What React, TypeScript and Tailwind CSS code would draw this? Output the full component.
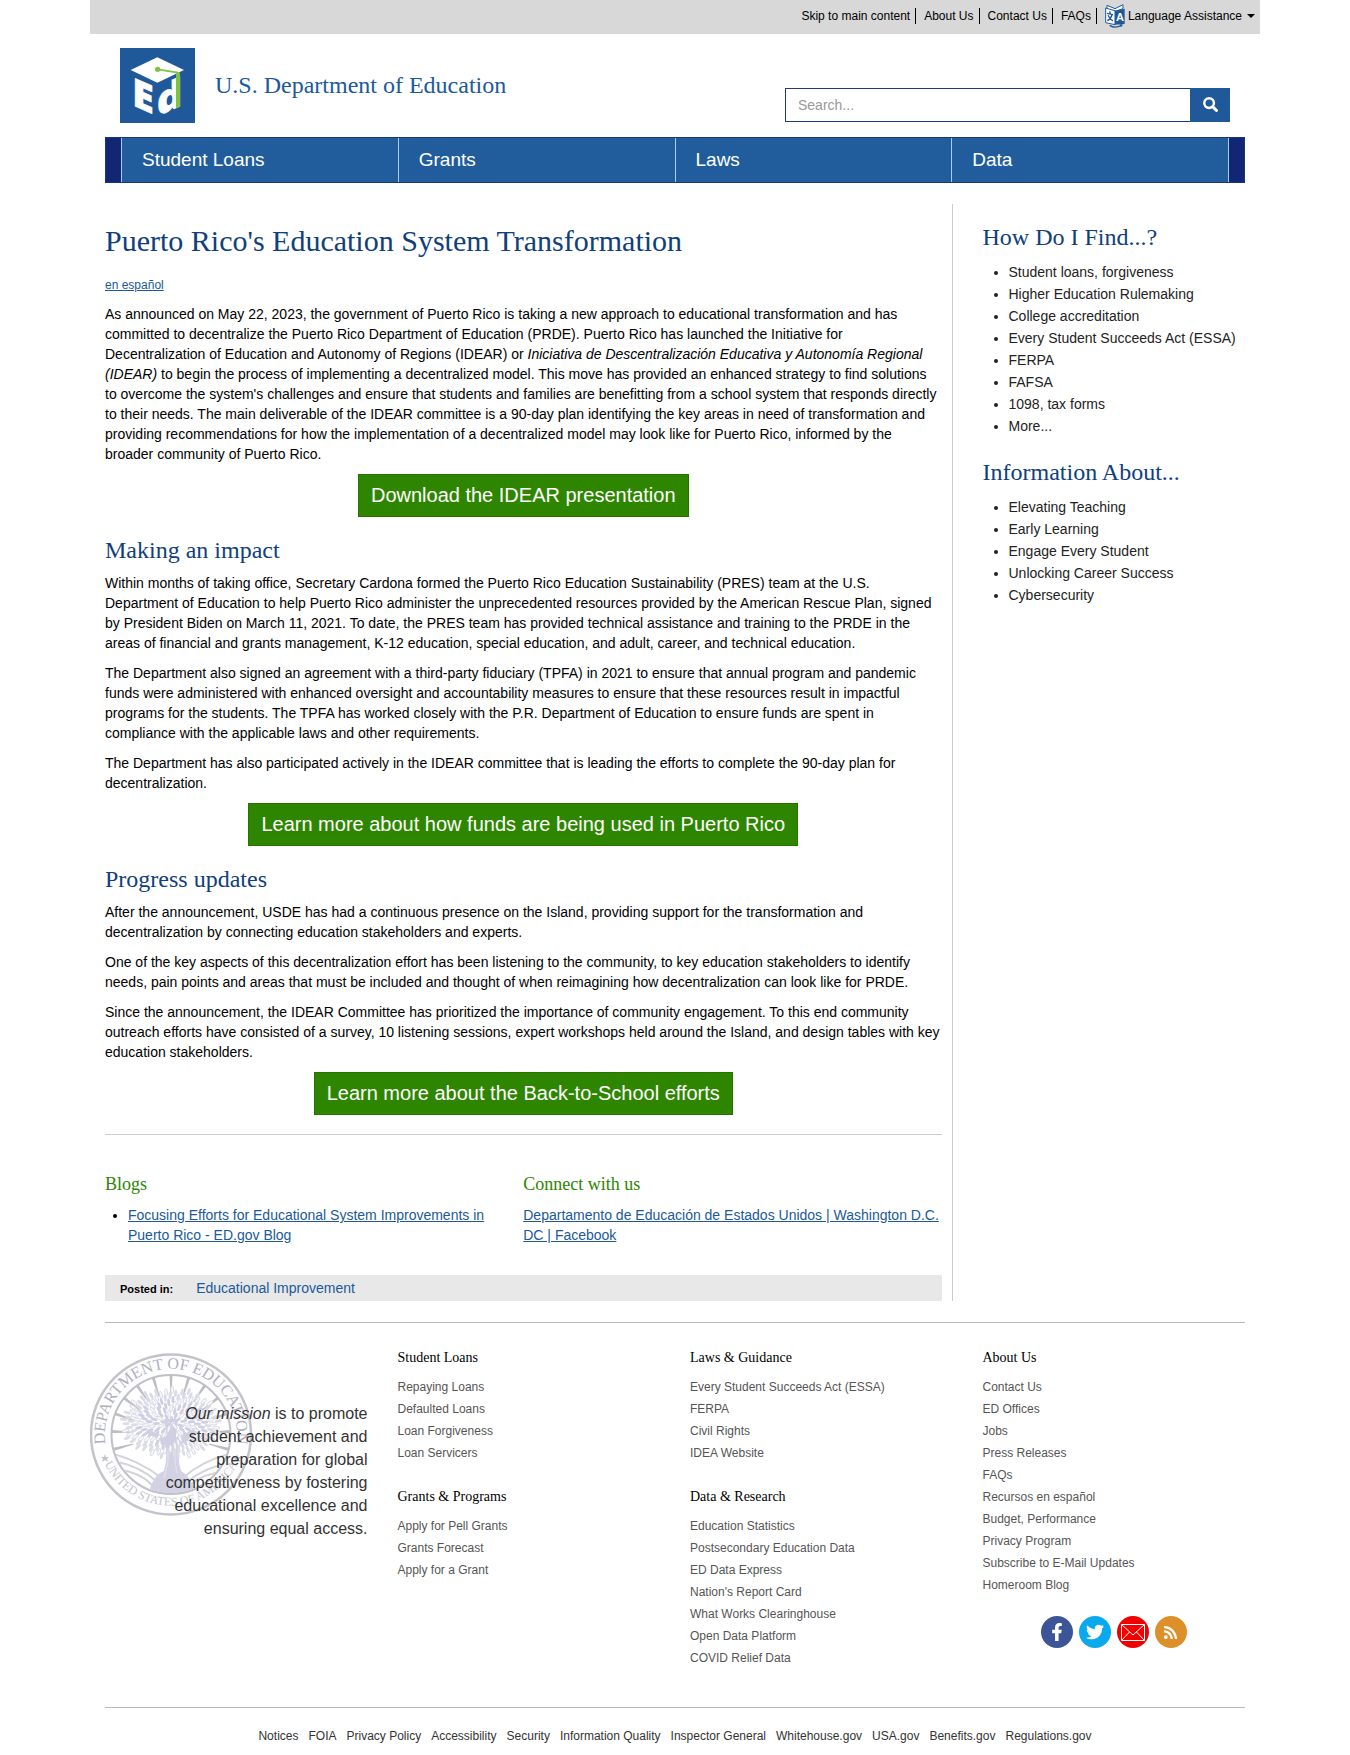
import React from "react";
import { FaFacebookF, FaTwitter, FaRss } from "react-icons/fa";

const serif = "font-['Liberation_Serif',serif]";

function EdLogo() {
  return (
    <svg viewBox="0 0 225 225" className="size-[75px] shrink-0 overflow-visible" role="img" aria-label="ED logo">
      <rect width="225" height="225" fill="#20599a" />
      <g fill="#fff" stroke="#fff" strokeWidth="2" fontFamily="'Open Sans', sans-serif" fontWeight="800">
        <text fontSize="117" transform="matrix(1 0.44 0 1 37 171)">E</text>
        <text fontSize="117" transform="matrix(1 -0.44 0 1 111 205)">d</text>
      </g>
      <path d="M112 28 192 66 112 104 32 66Z" fill="#fff" />
      <path d="M112 64 174 74" stroke="#7dc242" strokeWidth="5" />
      <path d="M168 71 180 74V176L168 181Z" fill="#7dc242" />
      <circle cx="113" cy="64" r="8" fill="#7dc242" />
    </svg>
  );
}

function LanguageIcon() {
  return (
    <svg viewBox="0 0 60 72" className="h-6 w-5" aria-hidden="true">
      <path d="M6 4 30 14 54 2V14L30 22 6 16Z" fill="#fff" stroke="#20599a" strokeWidth="3" />
      <path d="M2 12 30 20V62L2 56Z" fill="#fff" stroke="#20599a" strokeWidth="3" />
      <path d="M30 20 59 14V60L30 62Z" fill="#20599a" />
      <path d="M6 28 24 32M14 22 16 30M21 33Q17 46 7 50M9 34Q14 46 24 51" stroke="#20599a" strokeWidth="4" fill="none" />
      <text x="33" y="52" fontSize="33" fontWeight="700" fill="#fff" fontFamily="'Liberation Sans', sans-serif">A</text>
      <path d="M14 64Q30 74 48 65" fill="none" stroke="#20599a" strokeWidth="4" />
      <path d="M44 60 54 62 48 70Z" fill="#20599a" />
    </svg>
  );
}

const leaves = Array.from({ length: 190 }, (_, i) => {
  const angle = i * 2.39996;
  const radius = Math.sqrt(i / 190);
  return {
    x: 81 + Math.cos(angle) * radius * 49,
    y: 70 + Math.sin(angle) * radius * 34,
    turn: (angle * 180) / Math.PI,
    inner: radius < 0.72,
  };
});

function Seal() {
  const rays = Array.from({ length: 13 }, (_, i) => -105 + i * 17.5);
  return (
    <svg viewBox="0 0 163 163" className="absolute left-0 top-0 size-[163px]" aria-hidden="true">
      <defs>
        <path id="seal-upper" d="M21.300 110 A66 66 0 1 1 140.700 110" />
        <path id="seal-lower" d="M13 107 A73.500 73.500 0 0 0 149 107" />
        <clipPath id="seal-inner"><circle cx="81" cy="81" r="59" /></clipPath>
      </defs>
      <circle cx="81" cy="81.500" r="80" fill="#fdfdfe" stroke="#c3c3c9" strokeWidth="2.500" />
      <circle cx="81" cy="81.500" r="59.500" fill="#fff" stroke="#c0c0c6" strokeWidth="2" />
      {rays.map((a) => (
        <path key={a} d="M79.500 22h3l-1 20h-1z" fill="#bcbcc2" transform={`rotate(${a} 81 81)`} />
      ))}
      <g clipPath="url(#seal-inner)">
        <path d="M20 100Q50 108 70 124M22 108Q48 112 66 128M28 117Q48 118 62 132M142 100Q112 108 94 124M140 110Q116 114 98 128M134 119Q114 120 100 132" fill="none" stroke="#d3d3dc" strokeWidth="2" />
        <path d="M58 144Q62 122 74 118Q78 104 75 92Q66 84 55 80L58 76Q70 82 77 84L74 66H88L86 84Q98 80 106 74L109 78Q98 86 90 93Q87 106 91 118Q103 124 106 144Z" fill="#d2d2e4" />
        <path d="M74 125Q79 110 79 95M87 120Q84 108 85 95" stroke="#e4e4ef" fill="none" />
      </g>
      {leaves.map((l, i) => (
        <ellipse
          key={i}
          cx={l.x}
          cy={l.y}
          rx="3.600"
          ry="1.500"
          transform={`rotate(${l.turn} ${l.x} ${l.y})`}
          fill={i % 3 === 0 ? "#f6f6fb" : l.inner ? "#cfcfe4" : "#dcdce8"}
          stroke={i % 3 === 0 ? "#d0d0dc" : "none"}
          strokeWidth="0.700"
        />
      ))}
      <text className={serif} fontSize="16" fill="#b0b0bc">
        <textPath href="#seal-upper" startOffset="50%" textAnchor="middle">DEPARTMENT OF EDUCATION</textPath>
      </text>
      <text className={serif} fontSize="12" fill="#c4c4cd">
        <textPath href="#seal-lower" startOffset="50%" textAnchor="middle">UNITED STATES OF AMERICA</textPath>
      </text>
      <path d="m15 101 1 3h3l-2 2 1 3-3-2-3 2 1-3-2-2h3zM147 101l1 3h3l-2 2 1 3-3-2-3 2 1-3-2-2h3z" fill="#c3c3cb" />
    </svg>
  );
}

function TopBar() {
  const links = ["Skip to main content", "About Us", "Contact Us", "FAQs"];
  return (
    <div className="flex h-[34px] items-center justify-end bg-[#d8d8d8] pb-[2px] pr-[5px] text-xs leading-4 text-black">
      <ul className="flex">
        {links.map((l) => (
          <li key={l} className="mr-2 border-r border-black pr-[5px]">
            <a href="#">{l}</a>
          </li>
        ))}
      </ul>
      <button type="button" className="flex items-center">
        <LanguageIcon />
        <span className="ml-[3px]">Language Assistance</span>
        <span className="ml-[5px] border-x-4 border-t-4 border-x-transparent border-t-black" />
      </button>
    </div>
  );
}

function Header() {
  return (
    <header className="flex items-center justify-between px-[30px] pt-[14px]">
      <a href="#" className="flex items-center gap-5">
        <EdLogo />
        <span className={`${serif} pb-[2px] text-2xl text-[#20599a]`}>U.S. Department of Education</span>
      </a>
      <form className="mb-px flex w-[445px] self-end" onSubmit={(e) => e.preventDefault()}>
        <input
          type="search"
          aria-label="Search"
          placeholder="Search..."
          className="h-[34px] min-w-0 flex-1 border border-r-0 border-[#1c3d78] bg-white px-3 text-sm placeholder:text-[#999]"
        />
        <button type="submit" aria-label="Submit search" className="flex h-[34px] w-10 items-center justify-center bg-[#20599a]">
          <svg viewBox="0 0 14 14" className="mb-[2px] size-[15px]" fill="none" stroke="#fff" aria-hidden="true">
            <circle cx="5.700" cy="5.700" r="4.500" strokeWidth="2.300" />
            <path d="m9 9 3.600 3.600" strokeWidth="2.800" strokeLinecap="round" />
          </svg>
        </button>
      </form>
    </header>
  );
}

function Nav() {
  return (
    <nav className="mx-[15px] mt-[14px] border border-[#173a76] bg-[#132575] px-[15px]">
      <ul className="grid grid-cols-4 border-r border-[#a9cdf0] bg-[#215d9d] text-[19px] leading-[44px] text-white">
        {["Student Loans", "Grants", "Laws", "Data"].map((l) => (
          <li key={l} className="border-l border-[#a9cdf0]">
            <a href="#" className="block px-5">{l}</a>
          </li>
        ))}
      </ul>
    </nav>
  );
}

function H2({ children }: { children: React.ReactNode }) {
  return <h2 className={`${serif} mb-[10px] mt-5 text-2xl leading-[26px] text-[#0f407c]`}>{children}</h2>;
}

function P({ children }: { children: React.ReactNode }) {
  return <p className="mb-[10px]">{children}</p>;
}

function Cta({ children }: { children: React.ReactNode }) {
  return (
    <div className="flex justify-center">
      <a href="#" className="border border-[#267300] bg-[#2e8600] px-3 py-[6px] text-xl leading-[29px] text-white">{children}</a>
    </div>
  );
}

const link = "text-[#20599a] underline";

function Article() {
  return (
    <main className="col-span-3 px-[15px]">
      <div className="border-r border-[#ccc] pr-[10px] pt-5">
        <h1 className={`${serif} mb-5 text-3xl leading-[33px] text-[#0f407c]`}>Puerto Rico's Education System Transformation</h1>
        <p className="mb-[10px] text-xs leading-[17px]">
          <a href="#" className={link}>en español</a>
        </p>
        <P>
          As announced on May 22, 2023, the government of Puerto Rico is taking a new approach to educational transformation and has committed to decentralize the Puerto Rico Department of Education (PRDE). Puerto Rico has launched the Initiative for Decentralization of Education and Autonomy of Regions (IDEAR) or <em>Iniciativa de Descentralización Educativa y Autonomía Regional (IDEAR)</em> to begin the process of implementing a decentralized model. This move has provided an enhanced strategy to find solutions to overcome the system's challenges and ensure that students and families are benefitting from a school system that responds directly to their needs. The main deliverable of the IDEAR committee is a 90-day plan identifying the key areas in need of transformation and providing recommendations for how the implementation of a decentralized model may look like for Puerto Rico, informed by the broader community of Puerto Rico.
        </P>
        <Cta>Download the IDEAR presentation</Cta>
        <H2>Making an impact</H2>
        <P>Within months of taking office, Secretary Cardona formed the Puerto Rico Education Sustainability (PRES) team at the U.S. Department of Education to help Puerto Rico administer the unprecedented resources provided by the American Rescue Plan, signed by President Biden on March 11, 2021. To date, the PRES team has provided technical assistance and training to the PRDE in the areas of financial and grants management, K-12 education, special education, and adult, career, and technical education.</P>
        <P>The Department also signed an agreement with a third-party fiduciary (TPFA) in 2021 to ensure that annual program and pandemic funds were administered with enhanced oversight and accountability measures to ensure that these resources result in impactful programs for the students. The TPFA has worked closely with the P.R. Department of Education to ensure funds are spent in compliance with the applicable laws and other requirements.</P>
        <P>The Department has also participated actively in the IDEAR committee that is leading the efforts to complete the 90-day plan for decentralization.</P>
        <Cta>Learn more about how funds are being used in Puerto Rico</Cta>
        <H2>Progress updates</H2>
        <P>After the announcement, USDE has had a continuous presence on the Island, providing support for the transformation and decentralization by connecting education stakeholders and experts.</P>
        <P>One of the key aspects of this decentralization effort has been listening to the community, to key education stakeholders to identify needs, pain points and areas that must be included and thought of when reimagining how decentralization can look like for PRDE.</P>
        <P>Since the announcement, the IDEAR Committee has prioritized the importance of community engagement. To this end community outreach efforts have consisted of a survey, 10 listening sessions, expert workshops held around the Island, and design tables with key education stakeholders.</P>
        <Cta>Learn more about the Back-to-School efforts</Cta>
        <hr className="mt-[19px] border-[#ccc]" />
        <div className="mt-[39px] grid grid-cols-2">
          <section>
            <h3 className={`${serif} mb-[11px] text-lg leading-5 text-[#2e8600]`}>Blogs</h3>
            <ul className="list-disc pl-[23px] pr-5">
              <li><a href="#" className={link}>Focusing Efforts for Educational System Improvements in Puerto Rico - ED.gov Blog</a></li>
            </ul>
          </section>
          <section>
            <h3 className={`${serif} mb-[11px] text-lg leading-5 text-[#2e8600]`}>Connect with us</h3>
            <a href="#" className={link}>Departamento de Educación de Estados Unidos | Washington D.C. DC | Facebook</a>
          </section>
        </div>
        <div className="mt-[30px] flex h-[26px] items-center gap-[23px] bg-[#e8e8e8] px-[15px]">
          <span className="pt-px text-[11px] font-bold">Posted in:</span>
          <a href="#" className="text-[#20599a]">Educational Improvement</a>
        </div>
      </div>
    </main>
  );
}

function SideList({ title, items }: { title: string; items: string[] }) {
  return (
    <section className="mb-[22px]">
      <h2 className={`${serif} mb-[11px] text-2xl leading-[26px] text-[#0f407c]`}>{title}</h2>
      <ul className="list-disc pl-[26px] leading-[22px] text-[#222]">
        {items.map((l) => (
          <li key={l}><a href="#">{l}</a></li>
        ))}
      </ul>
    </section>
  );
}

function FooterList({ title, items }: { title: string; items: string[] }) {
  return (
    <section className="mb-[25px]">
      <h3 className={`${serif} mb-[10px] text-sm leading-4 text-black`}>{title}</h3>
      <ul className="text-xs leading-[22px] text-[#555]">
        {items.map((l) => (
          <li key={l}><a href="#">{l}</a></li>
        ))}
      </ul>
    </section>
  );
}

const social = "flex size-8 items-center justify-center rounded-full text-white";

function Footer() {
  return (
    <footer>
      <hr className="mx-[15px] mt-[21px] border-[#bbb]" />
      <div className="mt-[27px] grid grid-cols-4">
        <div className="pr-[15px] pt-[3px]">
          <div className="relative pt-[49px]">
            <Seal />
            <p className="relative ml-[60px] text-right text-base leading-[23px] text-[#333]">
              <em>Our mission</em> is to promote student achievement and preparation for global competitiveness by fostering educational excellence and ensuring equal access.
            </p>
          </div>
        </div>
        <div className="px-[15px]">
          <FooterList title="Student Loans" items={["Repaying Loans", "Defaulted Loans", "Loan Forgiveness", "Loan Servicers"]} />
          <FooterList title="Grants & Programs" items={["Apply for Pell Grants", "Grants Forecast", "Apply for a Grant"]} />
        </div>
        <div className="px-[15px] pb-[13px]">
          <FooterList title="Laws & Guidance" items={["Every Student Succeeds Act (ESSA)", "FERPA", "Civil Rights", "IDEA Website"]} />
          <FooterList title="Data & Research" items={["Education Statistics", "Postsecondary Education Data", "ED Data Express", "Nation's Report Card", "What Works Clearinghouse", "Open Data Platform", "COVID Relief Data"]} />
        </div>
        <div className="px-[15px]">
          <FooterList title="About Us" items={["Contact Us", "ED Offices", "Jobs", "Press Releases", "FAQs", "Recursos en español", "Budget, Performance", "Privacy Program", "Subscribe to E-Mail Updates", "Homeroom Blog"]} />
          <div className="-mt-[5px] flex justify-center gap-[6px]">
            <a href="#" aria-label="Facebook" className={`${social} bg-[#3b5598]`}><FaFacebookF className="size-[18px]" /></a>
            <a href="#" aria-label="Twitter" className={`${social} bg-[#0aa9ee]`}><FaTwitter className="size-[18px]" /></a>
            <a href="#" aria-label="E-mail" className={`${social} bg-[#f00000]`}>
              <svg viewBox="0 0 32 32" className="size-8" fill="none" stroke="#fff" aria-hidden="true">
                <path d="M4.500 8.500h23v16h-23zM4.500 8.500 16 19 27.500 8.500M4.500 24.500 12.500 16M27.500 24.500 19.500 16" />
              </svg>
            </a>
            <a href="#" aria-label="RSS" className={`${social} bg-[#dd9029]`}><FaRss className="size-[15px]" /></a>
          </div>
        </div>
      </div>
      <hr className="mx-[15px] border-[#bbb]" />
      <ul className="mt-5 flex flex-wrap justify-center gap-x-[10px] pb-[11px] text-xs leading-[17px] text-[#333]">
        {["Notices", "FOIA", "Privacy Policy", "Accessibility", "Security", "Information Quality", "Inspector General", "Whitehouse.gov", "USA.gov", "Benefits.gov", "Regulations.gov"].map((l) => (
          <li key={l}><a href="#">{l}</a></li>
        ))}
      </ul>
    </footer>
  );
}

export default function App() {
  return (
    <div className="bg-white font-['Liberation_Sans',Arial,sans-serif] text-sm leading-5 text-black">
      <div className="mx-auto max-w-[1170px]">
        <TopBar />
        <Header />
        <Nav />
        <div className="mt-[21px] grid grid-cols-4">
          <Article />
          <aside className="px-[15px] pt-5">
            <SideList title="How Do I Find...?" items={["Student loans, forgiveness", "Higher Education Rulemaking", "College accreditation", "Every Student Succeeds Act (ESSA)", "FERPA", "FAFSA", "1098, tax forms", "More..."]} />
            <SideList title="Information About..." items={["Elevating Teaching", "Early Learning", "Engage Every Student", "Unlocking Career Success", "Cybersecurity"]} />
          </aside>
        </div>
        <Footer />
      </div>
    </div>
  );
}
